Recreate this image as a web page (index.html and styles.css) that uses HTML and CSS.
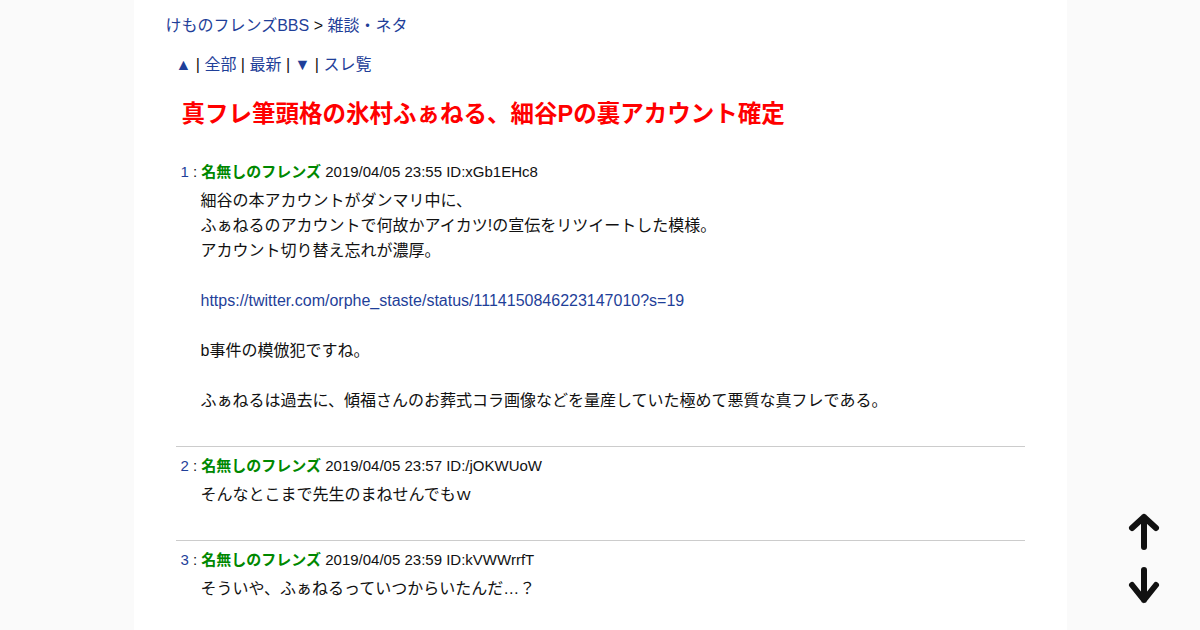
FILE: index.html
```html
<!DOCTYPE html>
<html lang="ja">

<head>
    <meta charset="UTF-8" />
    <title>真フレ筆頭格の氷村ふぁねる、細谷Pの裏アカウント確定 - けものフレンズBBS</title>
    <link rel="stylesheet" href="styles.css">
</head>

<body>
    <div class="page">
        <div class="crumb"><a href="#">けものフレンズBBS</a> &gt; <a href="#">雑談・ネタ</a></div>
        <div class="nav">
            <a href="#">▲</a> | <a href="#">全部</a> | <a href="#">最新</a> | <a href="#">▼</a> | <a href="#">スレ覧</a>
        </div>
        <h1 class="title">真フレ筆頭格の氷村ふぁねる、細谷Pの裏アカウント確定</h1>

        <div class="thread">
            <div class="post">
                <div class="post-head"><a class="num" href="#">1</a> : <b class="name">名無しのフレンズ</b> 2019/04/05 23:55 ID:xGb1EHc8</div>
                <div class="post-body">
                    細谷の本アカウントがダンマリ中に、<br>
                    ふぁねるのアカウントで何故かアイカツ!の宣伝をリツイートした模様。<br>
                    アカウント切り替え忘れが濃厚。<br>
                    <br>
                    <a href="#">https://twitter.com/orphe_staste/status/1114150846223147010?s=19</a><br>
                    <br>
                    b事件の模倣犯ですね。<br>
                    <br>
                    ふぁねるは過去に、傾福さんのお葬式コラ画像などを量産していた極めて悪質な真フレである。
                </div>
            </div>
            <div class="post">
                <div class="post-head"><a class="num" href="#">2</a> : <b class="name">名無しのフレンズ</b> 2019/04/05 23:57 ID:/jOKWUoW</div>
                <div class="post-body">そんなとこまで先生のまねせんでもｗ</div>
            </div>
            <div class="post">
                <div class="post-head"><a class="num" href="#">3</a> : <b class="name">名無しのフレンズ</b> 2019/04/05 23:59 ID:kVWWrrfT</div>
                <div class="post-body">そういや、ふぁねるっていつからいたんだ…？</div>
            </div>
        </div>
    </div>

    <div class="jump">
        <a href="#" class="jump-btn">
            <svg width="36" height="40" viewBox="0 0 36 40">
                <path d="M18 35V5M6 16L18 5L30 16" fill="none" stroke="#111" stroke-width="6" stroke-linecap="round" stroke-linejoin="round" />
            </svg>
        </a>
        <a href="#" class="jump-btn">
            <svg width="36" height="40" viewBox="0 0 36 40">
                <path d="M18 6V36M6 21L18 36L30 21" fill="none" stroke="#111" stroke-width="6" stroke-linecap="round" stroke-linejoin="round" />
            </svg>
        </a>
    </div>
</body>

</html>
```

FILE: styles.css
```css
body {
    margin: 0;
    font-family: "Liberation Sans", Arial, "Noto Sans CJK JP", sans-serif;
    font-size: 16px;
    line-height: 25px;
    color: #111;
    background: #fafafa;
}

a {
    color: #1f3f99;
    text-decoration: none;
}

.page {
    width: 933px;
    min-height: 630px;
    margin: 0 auto;
    background: #fff;
}

.crumb {
    padding: 13px 0 0 32px;
}

.nav {
    margin: 14px 0 0 42px;
}

.title {
    margin: 22px 0 0 48px;
    font-size: 23.5px;
    line-height: 30px;
    font-weight: bold;
    color: #f00;
}

.thread {
    margin: 30px 42px 0;
}

.post {
    padding: 6px 0 33px;
    border-bottom: 1px solid #ccc;
}

.post:first-child {
    padding-top: 0;
}

.post:last-child {
    border-bottom: none;
}

.post-head {
    padding-left: 5px;
    font-size: 15px;
}

.name {
    color: #080;
}

.post-body {
    margin: 4px 0 0 25px;
}

.jump {
    position: fixed;
    right: 38px;
    bottom: 26px;
    display: flex;
    flex-direction: column;
    gap: 12px;
}

.jump-btn {
    display: block;
    width: 36px;
    height: 40px;
}
```
